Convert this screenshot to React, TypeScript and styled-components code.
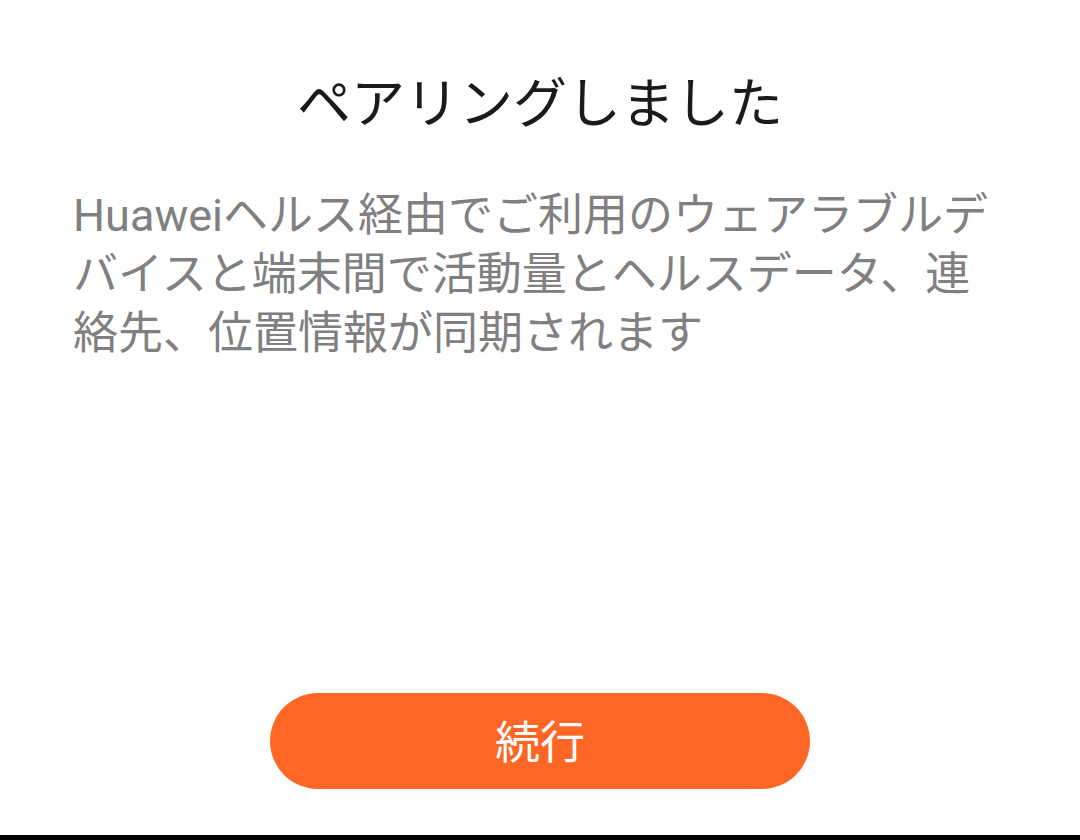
import React from 'react';
import styled, { createGlobalStyle } from 'styled-components';

const GlobalStyle = createGlobalStyle`
  html, body {
    margin: 0;
    padding: 0;
    background: #ffffff;
  }
  body {
    font-family: "Noto Sans CJK JP", "Noto Sans", sans-serif;
  }
`;

const Screen = styled.div`
  width: 1080px;
  height: 840px;
  display: flex;
  flex-direction: column;
  background: #ffffff;
  overflow: hidden;
`;

const Title = styled.h1`
  margin: 64px 0 0;
  font-size: 54px;
  line-height: 72px;
  font-weight: 400;
  color: #1a1a1a;
  text-align: center;
`;

// Latin part ("Huawei") is set in Roboto, the rest falls through to Noto CJK
const Description = styled.p`
  margin: 50px 73px 0;
  font-family: Roboto, "Noto Sans CJK JP", sans-serif;
  font-size: 45px;
  line-height: 59px;
  font-weight: 400;
  color: #808080;
`;

const Spacer = styled.div`
  flex: 1;
`;

const Footer = styled.div`
  display: flex;
  justify-content: center;
  padding-bottom: 46px;
`;

const ContinueButton = styled.button`
  width: 540px;
  height: 96px;
  padding: 0 0 4px;
  border: none;
  border-radius: 48px;
  background-color: #fd6624;
  color: #ffffff;
  font-family: inherit;
  font-size: 45px;
  cursor: pointer;
`;

const NavBar = styled.div`
  height: 5px;
  background: #000000;
`;

const App: React.FC = () => {
  return (
    <>
      <GlobalStyle />
      <Screen>
        <Title>ペアリングしました</Title>
        <Description>
          Huaweiヘルス経由でご利用のウェアラブルデバイスと端末間で活動量とヘルスデータ、連絡先、位置情報が同期されます
        </Description>
        <Spacer />
        <Footer>
          <ContinueButton type="button">続行</ContinueButton>
        </Footer>
        <NavBar />
      </Screen>
    </>
  );
};

export default App;
